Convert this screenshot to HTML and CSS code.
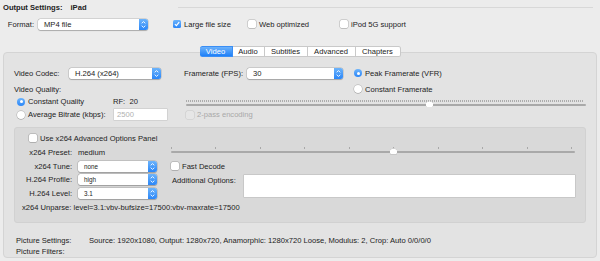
FILE: index.html
```html
<!DOCTYPE html>
<html lang="en">
<head>
  <meta charset="UTF-8" />
  <title>Output Settings</title>
  <link rel="stylesheet" href="styles.css">
</head>
<body>
  <div class="title-row">
    <b>Output Settings:</b>
    <b class="preset">iPad</b>
    <span class="rule"></span>
  </div>

  <div class="format-row">
    <span class="format-label">Format:</span>
    <div class="popup w-format">
      <span>MP4 file</span>
      <i class="step"><svg viewBox="0 0 9 11"><path d="M2.7 4.3 L4.5 2.6 L6.3 4.3 M2.7 6.7 L4.5 8.4 L6.3 6.7" /></svg></i>
    </div>
    <label class="check-item w-large"><span class="check on"><svg viewBox="0 0 8 8"><path d="M1.9 4.1 L3.4 5.7 L6.2 2.2" /></svg></span>Large file size</label>
    <label class="check-item w-web"><span class="check"></span>Web optimized</label>
    <label class="check-item"><span class="check"></span>iPod 5G support</label>
  </div>

  <div class="tabs">
    <span class="tab active t-video">Video</span>
    <span class="tab t-audio">Audio</span>
    <span class="tab t-subs">Subtitles</span>
    <span class="tab t-adv">Advanced</span>
    <span class="tab t-chap">Chapters</span>
  </div>

  <div class="box">
    <div class="row r1">
      <div class="col-l">
        <span class="codec-label">Video Codec:</span>
        <div class="popup w-codec">
          <span>H.264 (x264)</span>
          <i class="step"><svg viewBox="0 0 9 11"><path d="M2.7 4.3 L4.5 2.6 L6.3 4.3 M2.7 6.7 L4.5 8.4 L6.3 6.7" /></svg></i>
        </div>
      </div>
      <div class="col-m">
        <span class="fps-label">Framerate (FPS):</span>
        <div class="popup w-fps">
          <span>30</span>
          <i class="step"><svg viewBox="0 0 9 11"><path d="M2.7 4.3 L4.5 2.6 L6.3 4.3 M2.7 6.7 L4.5 8.4 L6.3 6.7" /></svg></i>
        </div>
      </div>
      <label class="radio-item"><span class="radio on"></span>Peak Framerate (VFR)</label>
    </div>

    <div class="row r2">
      <div class="col-l">Video Quality:</div>
      <div class="col-m"></div>
      <label class="radio-item"><span class="radio"></span>Constant Framerate</label>
    </div>

    <div class="row r3">
      <div class="col-l">
        <label class="radio-item q-item w-cq"><span class="radio on"></span>Constant Quality</label>
        <span>RF:&nbsp; 20</span>
      </div>
      <div class="slider top-slider">
        <span class="ticks dense"></span>
        <span class="track"></span>
        <span class="thumb s-top"></span>
      </div>
    </div>

    <div class="row r4">
      <div class="col-l">
        <label class="radio-item q-item w-ab"><span class="radio"></span>Average Bitrate (kbps):</label>
        <span class="field">2500</span>
      </div>
      <label class="check-item disabled twopass"><span class="check"></span>2-pass encoding</label>
    </div>

    <div class="inner">
      <label class="check-item use-adv"><span class="check"></span>Use x264 Advanced Options Panel</label>

      <div class="adv">
        <div class="adv-left">
          <div class="adv-row"><span class="adv-label">x264 Preset:</span><span>medium</span></div>
          <div class="adv-row">
            <span class="adv-label">x264 Tune:</span>
            <div class="popup small w-small"><span>none</span><i class="step"><svg viewBox="0 0 9 11"><path d="M2.7 4.3 L4.5 2.6 L6.3 4.3 M2.7 6.7 L4.5 8.4 L6.3 6.7" /></svg></i></div>
          </div>
          <div class="adv-row">
            <span class="adv-label">H.264 Profile:</span>
            <div class="popup small w-small"><span>high</span><i class="step"><svg viewBox="0 0 9 11"><path d="M2.7 4.3 L4.5 2.6 L6.3 4.3 M2.7 6.7 L4.5 8.4 L6.3 6.7" /></svg></i></div>
          </div>
          <div class="adv-row">
            <span class="adv-label">H.264 Level:</span>
            <div class="popup small w-small"><span>3.1</span><i class="step"><svg viewBox="0 0 9 11"><path d="M2.7 4.3 L4.5 2.6 L6.3 4.3 M2.7 6.7 L4.5 8.4 L6.3 6.7" /></svg></i></div>
          </div>
        </div>

        <div class="adv-right">
          <div class="adv-row">
            <div class="slider preset-slider">
              <span class="ticks sparse"></span>
              <span class="track"></span>
              <span class="thumb s-preset"></span>
            </div>
          </div>
          <div class="adv-row">
            <label class="check-item"><span class="check"></span>Fast Decode</label>
          </div>
          <div class="options">
            <span class="options-label">Additional Options:</span>
            <span class="textarea"></span>
          </div>
        </div>
      </div>

      <div class="unparse">x264 Unparse: level=3.1:vbv-bufsize=17500:vbv-maxrate=17500</div>
    </div>

    <div class="pic-row pic-first">
      <span class="pic-label">Picture Settings:</span>
      <span>Source: 1920x1080, Output: 1280x720, Anamorphic: 1280x720 Loose, Modulus: 2, Crop: Auto 0/0/0/0</span>
    </div>
    <div class="pic-row">
      <span class="pic-label">Picture Filters:</span>
    </div>
  </div>
</body>
</html>
```

FILE: styles.css
```css
* {
  box-sizing: border-box;
}

body {
  margin: 0;
  padding: 0 3px;
  width: 600px;
  height: 261px;
  overflow: hidden;
  background-color: #ececec;
  font-family: "Liberation Sans", Arial, sans-serif;
  font-size: 7.6px;
  color: #222;
}

label {
  cursor: default;
}

/* header */
.title-row {
  display: flex;
  align-items: center;
  height: 14px;
}

.title-row b {
  font-weight: bold;
}

.preset {
  margin-left: 8px;
}

.rule {
  margin-left: auto;
  margin-right: 4px;
  width: 415px;
  height: 1px;
  background-color: #d8d8d8;
}

.format-row {
  display: flex;
  align-items: center;
  height: 12px;
  margin-top: 4px;
}

.format-label {
  width: 35px;
  padding-right: 4px;
  text-align: right;
}

/* popup buttons */
.popup {
  position: relative;
  display: flex;
  align-items: center;
  height: 11px;
  padding-left: 6px;
  background-color: #fff;
  border-radius: 2.5px;
  box-shadow: 0 0 0 0.5px rgba(0, 0, 0, 0.18), 0 0.5px 1px rgba(0, 0, 0, 0.2);
}

.popup span {
  flex: 1;
}

.popup.small {
  font-size: 6.3px;
}

.step {
  width: 9px;
  height: 11px;
  border-radius: 0 2.5px 2.5px 0;
  background: linear-gradient(#6db4fb, #2a86f8);
  display: flex;
}

.step svg {
  width: 9px;
  height: 11px;
}

.step path {
  fill: none;
  stroke: #fff;
  stroke-width: 0.9;
}

.w-format { width: 110px; margin-right: 25px; }
.w-codec { width: 92px; }
.w-fps { width: 96px; }
.w-small { width: 79px; }

/* checkboxes and radios */
.check-item,
.radio-item {
  display: flex;
  align-items: center;
}

.check {
  width: 8px;
  height: 8px;
  margin-right: 3px;
  border-radius: 1.5px;
  background-color: #fff;
  box-shadow: 0 0 0 0.5px rgba(0, 0, 0, 0.25), 0 0.5px 0.5px rgba(0, 0, 0, 0.15);
  display: flex;
}

.check.on {
  background: linear-gradient(#6db4fb, #2a86f8);
  box-shadow: none;
}

.check svg {
  width: 8px;
  height: 8px;
}

.check path {
  fill: none;
  stroke: #fff;
  stroke-width: 1.2;
}

.w-large { width: 75px; }
.w-web { width: 92px; }

.radio {
  width: 8px;
  height: 8px;
  margin-right: 3px;
  border-radius: 50%;
  background-color: #fff;
  box-shadow: 0 0 0 0.5px rgba(0, 0, 0, 0.25), 0 0.5px 0.5px rgba(0, 0, 0, 0.15);
  display: flex;
  align-items: center;
  justify-content: center;
}

.radio.on {
  background: linear-gradient(#6db4fb, #2a86f8);
  box-shadow: none;
}

.radio.on::after {
  content: "";
  width: 3px;
  height: 3px;
  border-radius: 50%;
  background-color: #fff;
}

.disabled {
  color: #a9a9a9;
}

.disabled .check {
  background-color: #e6e6e6;
  box-shadow: 0 0 0 0.5px rgba(0, 0, 0, 0.12);
}

/* tabs */
.tabs {
  position: relative;
  z-index: 1;
  display: flex;
  justify-content: center;
  height: 11px;
  margin-top: 16px;
  margin-bottom: -5px;
}

.tab {
  display: flex;
  align-items: center;
  justify-content: center;
  height: 11px;
  background-color: #fff;
  border: 0.5px solid #c9c9c9;
  border-left: none;
  color: #222;
}

.tab:last-child {
  border-radius: 0 2.5px 2.5px 0;
}

.tab.active {
  background: linear-gradient(#6cb2fb, #1e80f8);
  border-color: #3a8ef5;
  border-radius: 2.5px 0 0 2.5px;
  color: #fff;
}

.t-video { width: 33px; }
.t-audio { width: 32px; }
.t-subs { width: 43px; }
.t-adv { width: 48px; }
.t-chap { width: 45px; }

/* main box */
.box {
  height: 206px;
  padding: 13px 10px 0;
  background-color: #e3e3e3;
  border: 1px solid #d4d4d4;
  border-radius: 4px;
}

.row {
  display: flex;
  align-items: center;
}

.r1 { height: 14px; }
.r2 { height: 12px; margin-top: 3px; }
.r3 { height: 13px; }
.r4 { height: 13px; }

.col-l {
  width: 170px;
  display: flex;
  align-items: center;
}

.col-m {
  width: 170px;
  display: flex;
  align-items: center;
}

.codec-label { width: 55px; }
.fps-label { width: 63px; }

.q-item {
  margin-left: 3px;
}

.w-cq { width: 96px; }
.w-ab { width: 97px; }

.field {
  width: 53px;
  height: 11px;
  padding-left: 3px;
  display: flex;
  align-items: center;
  background-color: #fff;
  color: #b0b0b0;
  box-shadow: 0 0 0 0.5px rgba(0, 0, 0, 0.15);
}

.twopass {
  margin-left: 2px;
}

/* sliders */
.slider {
  position: relative;
  height: 13px;
}

.top-slider {
  width: 400px;
  margin-left: 2px;
}

.ticks {
  position: absolute;
  left: 0;
  right: 2px;
}

.ticks.dense {
  top: 5px;
  height: 2px;
  background: repeating-linear-gradient(90deg, #acacac 0 1px, transparent 1px 2px);
}

.ticks.sparse {
  top: 3px;
  height: 2px;
  background: repeating-linear-gradient(90deg, #a8a8a8 0 0.6px, transparent 0.6px 44.5px);
}

.track {
  position: absolute;
  left: 0;
  right: 0;
  top: 9px;
  height: 2px;
  border-radius: 1px;
  background-color: #a9a9a9;
}

.thumb {
  position: absolute;
  top: 6px;
  width: 7px;
  height: 6px;
  background-color: #fff;
  border-radius: 1px;
  box-shadow: 0 0 0 0.5px rgba(0, 0, 0, 0.2), 0 0.5px 1px rgba(0, 0, 0, 0.25);
  clip-path: polygon(50% 0, 100% 35%, 100% 100%, 0 100%, 0 35%);
}

.s-top { left: 240px; }

.preset-slider {
  width: 404px;
  margin-top: -4px;
}

.preset-slider .track { top: 7px; }
.preset-slider .thumb { top: 4px; }
.s-preset { left: 219px; }

/* advanced panel */
.inner {
  height: 96px;
  margin-top: 6px;
  padding-right: 10px;
  background-color: #d9d9d9;
  border: 1px solid #d1d1d1;
  border-radius: 3px;
}

.use-adv {
  height: 12px;
  margin-top: 4px;
  padding-left: 14px;
}

.adv {
  display: flex;
  margin-top: 2px;
}

.adv-left {
  width: 156px;
}

.adv-right {
  flex: 1;
}

.adv-row {
  display: flex;
  align-items: center;
  height: 13.5px;
}

.adv-label {
  width: 57px;
  margin-right: 6px;
  text-align: right;
}

.options {
  display: flex;
  align-items: flex-start;
}

.options-label {
  width: 72px;
  margin-left: 1px;
  margin-top: 3px;
}

.textarea {
  flex: 1;
  height: 22px;
  margin-top: 1.5px;
  background-color: #fff;
  box-shadow: 0 0 0 0.5px rgba(0, 0, 0, 0.15);
}

.unparse {
  display: flex;
  align-items: center;
  height: 14px;
  padding-left: 7px;
}

/* picture summary */
.pic-row {
  display: flex;
  align-items: center;
  height: 11px;
  padding-left: 2px;
}

.pic-first {
  margin-top: 11.5px;
}

.pic-label {
  width: 73px;
}
```
